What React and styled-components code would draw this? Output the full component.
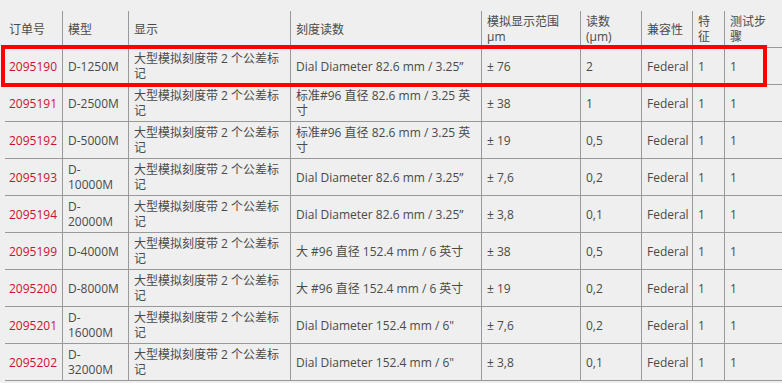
import styled, { createGlobalStyle } from "styled-components";

const GlobalStyle = createGlobalStyle`
  html, body {
    margin: 0;
    padding: 0;
    background: #efefef;
  }
  body {
    font-family: "Open Sans", "Noto Sans CJK SC", sans-serif;
    overflow: hidden;
  }
`;

const Page = styled.div`
  position: relative;
  padding: 11px 0 0 5px;
`;

const Table = styled.table`
  border-collapse: separate;
  border-spacing: 0;
  table-layout: fixed;
  width: 777px;
  font-size: 12px;
  line-height: 15px;
  color: #4a4a4a;
`;

const HeadCell = styled.th`
  box-sizing: border-box;
  width: ${(p) => p.$w}px;
  padding: 3px 5px 3px ${(p) => (p.$first ? 4 : 5)}px;
  font-weight: normal;
  text-align: left;
  vertical-align: middle;
  border-left: ${(p) => (p.$first ? "none" : "1px solid #999")};
  border-bottom: 1px solid #999;
`;

const Cell = styled.td`
  box-sizing: border-box;
  height: 37px;
  padding: 3px 5px 3px ${(p) => (p.$first ? 4 : 5)}px;
  vertical-align: middle;
  border-left: ${(p) => (p.$first ? "none" : "1px solid #999")};
  border-bottom: 1px solid #999;
  color: ${(p) => (p.$link ? "#cc1034" : "inherit")};
`;

const Highlight = styled.div`
  position: absolute;
  left: 1px;
  top: 45px;
  width: 766px;
  height: 42px;
  box-sizing: border-box;
  border: 4px solid #ff0000;
  pointer-events: none;
`;

const columns = [
  { label: "订单号", w: 57 },
  { label: "模型", w: 66 },
  { label: "显示", w: 162 },
  { label: "刻度读数", w: 191 },
  { label: "模拟显示范围 μm", w: 99 },
  { label: "读数 (μm)", w: 61 },
  { label: "兼容性", w: 51 },
  { label: "特征", w: 32 },
  { label: "测试步骤", w: 58 },
];

const display = "大型模拟刻度带 2 个公差标记";
const dial82 = "Dial Diameter 82.6 mm / 3.25”";
const std82 = "标准#96 直径 82.6 mm / 3.25 英寸";
const big152 = "大 #96 直径 152.4 mm / 6 英寸";
const dial152 = 'Dial Diameter 152.4 mm / 6"';

const rows = [
  ["2095190", "D-1250M", dial82, "± 76", "2"],
  ["2095191", "D-2500M", std82, "± 38", "1"],
  ["2095192", "D-5000M", std82, "± 19", "0,5"],
  ["2095193", "D-10000M", dial82, "± 7,6", "0,2"],
  ["2095194", "D-20000M", dial82, "± 3,8", "0,1"],
  ["2095199", "D-4000M", big152, "± 38", "0,5"],
  ["2095200", "D-8000M", big152, "± 19", "0,2"],
  ["2095201", "D-16000M", dial152, "± 7,6", "0,2"],
  ["2095202", "D-32000M", dial152, "± 3,8", "0,1"],
];

export default function App() {
  return (
    <Page>
      <GlobalStyle />
      <Table>
        <thead>
          <tr>
            {columns.map((c, i) => (
              <HeadCell key={c.label} $w={c.w} $first={i === 0}>
                {c.label}
              </HeadCell>
            ))}
          </tr>
        </thead>
        <tbody>
          {rows.map(([order, model, scale, range, reading]) => (
            <tr key={order}>
              <Cell $first $link>
                {order}
              </Cell>
              <Cell>{model}</Cell>
              <Cell>{display}</Cell>
              <Cell>{scale}</Cell>
              <Cell>{range}</Cell>
              <Cell>{reading}</Cell>
              <Cell>Federal</Cell>
              <Cell>1</Cell>
              <Cell>1</Cell>
            </tr>
          ))}
        </tbody>
      </Table>
      <Highlight />
    </Page>
  );
}
